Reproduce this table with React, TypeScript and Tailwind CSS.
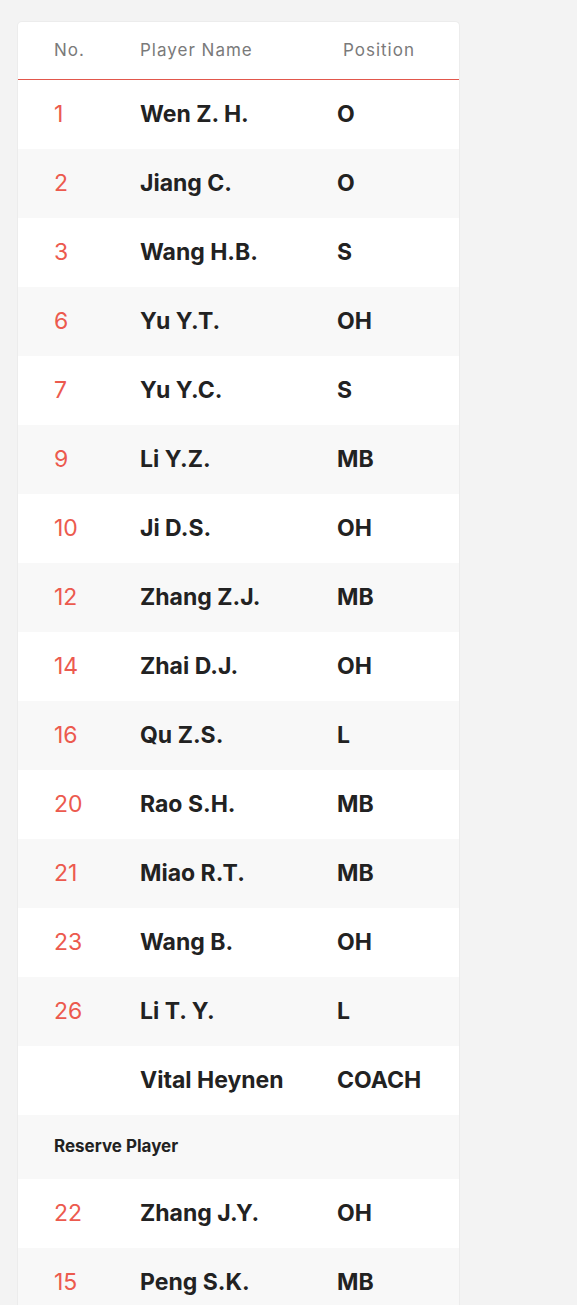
import React from "react";

const players: [string, string, string][] = [
  ["1", "Wen Z. H.", "O"],
  ["2", "Jiang C.", "O"],
  ["3", "Wang H.B.", "S"],
  ["6", "Yu Y.T.", "OH"],
  ["7", "Yu Y.C.", "S"],
  ["9", "Li Y.Z.", "MB"],
  ["10", "Ji D.S.", "OH"],
  ["12", "Zhang Z.J.", "MB"],
  ["14", "Zhai D.J.", "OH"],
  ["16", "Qu Z.S.", "L"],
  ["20", "Rao S.H.", "MB"],
  ["21", "Miao R.T.", "MB"],
  ["23", "Wang B.", "OH"],
  ["26", "Li T. Y.", "L"],
  ["", "Vital Heynen", "COACH"],
];

const reserves: [string, string, string][] = [
  ["22", "Zhang J.Y.", "OH"],
  ["15", "Peng S.K.", "MB"],
];

function Row({ r, grey }: { r: [string, string, string]; grey: boolean }) {
  return (
    <div className={`flex items-center h-[69px] pl-[36px] ${grey ? "bg-[#f8f8f8]" : "bg-white"}`}>
      <div className="w-[86px] text-[23px] font-normal text-[#ec5a4e]">{r[0]}</div>
      <div className="w-[197px] text-[23px] font-bold text-[#222]">{r[1]}</div>
      <div className="text-[23px] font-bold text-[#222]">{r[2]}</div>
    </div>
  );
}

export default function App() {
  return (
    <div className="min-h-[1305px] bg-[#f3f3f3] pt-[21px] pl-[17px]" style={{ fontFamily: "Inter, 'Noto Sans', sans-serif" }}>
      <div className="w-[443px] bg-white rounded-t-[5px] border border-[#ececec] border-b-0 overflow-hidden">
        <div className="flex items-center h-[57px] pl-[36px] text-[17px] tracking-[1px] text-[#7a7a7a]">
          <div className="w-[86px]">No.</div>
          <div className="w-[197px]">Player Name</div>
          <div className="pl-[6px]">Position</div>
        </div>
        <div className="h-px bg-[#e2574c]" />
        {players.map((r, i) => (
          <Row key={i} r={r} grey={i % 2 === 1} />
        ))}
        <div className="flex items-center h-[64px] pl-[36px] bg-[#f8f8f8] text-[17px] font-bold text-[#222]">
          Reserve Player
        </div>
        {reserves.map((r, i) => (
          <Row key={i} r={r} grey={i % 2 === 1} />
        ))}
      </div>
    </div>
  );
}
